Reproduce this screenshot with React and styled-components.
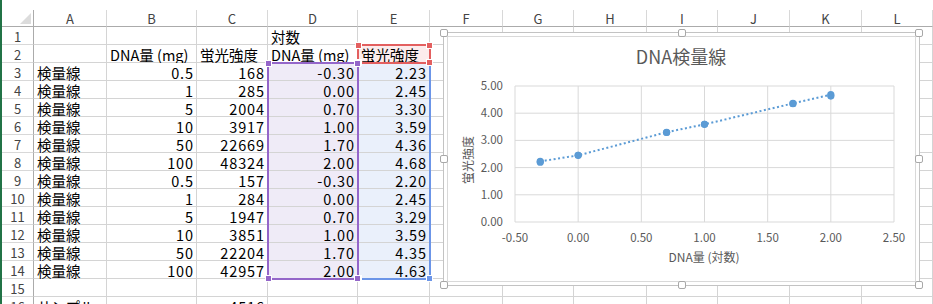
import React from 'react'
import styled, { createGlobalStyle, css } from 'styled-components'

const GlobalStyle = createGlobalStyle`
  html, body {
    margin: 0;
    padding: 0;
    background: #fff;
  }
  body {
    font-family: "Noto Sans CJK JP", "Noto Sans", sans-serif;
    overflow: hidden;
  }
`

const COLS = ['A', 'B', 'C', 'D', 'E', 'F', 'G', 'H', 'I', 'J', 'K', 'L']
const WIDTHS = [73, 90, 71, 90, 72, 73, 71, 73, 71, 72, 72, 71]
const TEMPLATE = `32px ${WIDTHS.map(w => w + 'px').join(' ')}`

const std = [
  ['0.5', '168', '-0.30', '2.23'],
  ['1', '285', '0.00', '2.45'],
  ['5', '2004', '0.70', '3.30'],
  ['10', '3917', '1.00', '3.59'],
  ['50', '22669', '1.70', '4.36'],
  ['100', '48324', '2.00', '4.68'],
  ['0.5', '157', '-0.30', '2.20'],
  ['1', '284', '0.00', '2.45'],
  ['5', '1947', '0.70', '3.29'],
  ['10', '3851', '1.00', '3.59'],
  ['50', '22204', '1.70', '4.35'],
  ['100', '42957', '2.00', '4.63'],
]

// sheet rows, column A..E
const ROWS = [
  ['', '', '', '対数', ''],
  ['', 'DNA量 (mg)', '蛍光強度', 'DNA量 (mg)', '蛍光強度'],
  ...std.map(r => ['検量線', ...r]),
  ['', '', '', '', ''],
  ['サンプル', '', '4516', '', ''],
]

const tintFor = (row, col) => {
  if (col === 3 && row >= 3 && row <= 14) return 'purple'
  if (col === 4 && row >= 3 && row <= 14) return 'blue'
  if (col === 4 && row === 2) return 'red'
  return null
}

const TINTS = {
  purple: '#efebf7',
  blue: '#eaf0fb',
  red: '#fcecec',
}

const RANGES = [
  { col: 6, r0: 3, r1: 14, color: '#6b95e8', corners: ['bl', 'br'] },
  { col: 6, r0: 2, r1: 2, color: '#e35f5f', corners: ['tl', 'tr', 'bl', 'br'] },
  { col: 5, r0: 3, r1: 14, color: '#9466c9', corners: ['tl', 'tr', 'bl', 'br'] },
]

function Sheet() {
  return (
    <SheetWrap>
      <Grid>
        <Corner />
        {COLS.map(c => <ColHead key={c}>{c}</ColHead>)}
        {ROWS.map((row, ri) => (
          <React.Fragment key={ri}>
            <RowHead>{ri + 1}</RowHead>
            {COLS.map((c, ci) => {
              const v = row[ci] || ''
              const num = v !== '' && !isNaN(Number(v))
              return (
                <Cell key={c} $right={num} $tint={tintFor(ri + 1, ci)}>
                  {v}
                </Cell>
              )
            })}
          </React.Fragment>
        ))}
      </Grid>
      <Overlay>
        {RANGES.map((r, i) => (
          <Range key={i} $col={r.col} $r0={r.r0} $r1={r.r1} $color={r.color}>
            {r.corners.map(k => <Handle key={k} $pos={k} $color={r.color} />)}
          </Range>
        ))}
      </Overlay>
      <Chart />
    </SheetWrap>
  )
}

// chart geometry, page coordinates
const X0 = 513
const X1 = 892
const YT = 86
const YB = 222
const xs = v => X0 + ((v + 0.5) / 3) * (X1 - X0)
const ys = v => YB - (v / 5) * (YB - YT)

const series = std.map(r => [Number(r[2]), Number(r[3])])

function Chart() {
  const xTicks = [-0.5, 0, 0.5, 1, 1.5, 2, 2.5]
  const yTicks = [0, 1, 2, 3, 4, 5]
  const line = series.slice(0, 6).map(([x, y]) => `${xs(x)},${ys(y)}`).join(' ')
  return (
    <ChartFrame>
      {['tl', 'tc', 'tr', 'ml', 'mr', 'bl', 'bc', 'br'].map(k => <FrameHandle key={k} $pos={k} />)}
      <ChartArea>
        <svg width="467" height="244" viewBox="446 37 467 244">
          <ChartTitle x="679" y="64" textAnchor="middle">DNA検量線</ChartTitle>
          {xTicks.map(t => (
            <line key={'gx' + t} x1={xs(t)} x2={xs(t)} y1={YT} y2={YB} stroke="#d9d9d9" strokeWidth="1" />
          ))}
          {yTicks.map(t => (
            <line key={'gy' + t} x1={X0} x2={X1} y1={ys(t)} y2={ys(t)} stroke="#d9d9d9" strokeWidth="1" />
          ))}
          {yTicks.map(t => (
            <TickText key={'ly' + t} x="501" y={ys(t) + 4} textAnchor="end">{t.toFixed(2)}</TickText>
          ))}
          {xTicks.map(t => (
            <TickText key={'lx' + t} x={xs(t)} y="242" textAnchor="middle">{t.toFixed(2)}</TickText>
          ))}
          <polyline points={line} fill="none" stroke="#5b9bd5" strokeWidth="2" strokeDasharray="2 2.5" />
          {series.map(([x, y], i) => (
            <circle key={i} cx={xs(x)} cy={ys(y)} r="3.6" fill="#5b9bd5" />
          ))}
          <AxisText x="702" y="262" textAnchor="middle">DNA量 (対数)</AxisText>
          <AxisText x="0" y="0" textAnchor="middle" transform="translate(471 160) rotate(-90)">蛍光強度</AxisText>
        </svg>
      </ChartArea>
    </ChartFrame>
  )
}

export default function App() {
  return (
    <>
      <GlobalStyle />
      <Sheet />
    </>
  )
}

const SheetWrap = styled.div`
  position: relative;
  width: 933px;
  height: 304px;
  overflow: hidden;
  box-sizing: border-box;
  border-left: 2px solid #217346;
  padding-top: 10px;
`

const Grid = styled.div`
  display: grid;
  grid-template-columns: ${TEMPLATE};
  grid-template-rows: 17px;
  grid-auto-rows: 18px;
`

const Overlay = styled.div`
  position: absolute;
  top: 10px;
  left: 0;
  display: grid;
  grid-template-columns: ${TEMPLATE};
  grid-template-rows: 17px;
  grid-auto-rows: 18px;
  pointer-events: none;
`

const headText = css`
  display: flex;
  align-items: center;
  justify-content: center;
  font-size: 13px;
  line-height: 15px;
  color: #444;
  box-sizing: border-box;
`

const Corner = styled.div`
  position: relative;
  border-right: 1px solid #ababab;
  border-bottom: 1px solid #ababab;
  &::after {
    content: '';
    position: absolute;
    right: 2px;
    bottom: 2px;
    width: 11px;
    height: 11px;
    background: #dcdcdc;
    clip-path: polygon(100% 0, 100% 100%, 0 100%);
  }
`

const ColHead = styled.div`
  ${headText}
  border-right: 1px solid #d8d8d8;
  border-bottom: 1px solid #ababab;
  padding-top: 1px;
`

const RowHead = styled.div`
  ${headText}
  border-right: 1px solid #ababab;
  border-bottom: 1px solid #d8d8d8;
  padding-top: 2px;
`

const Cell = styled.div`
  box-sizing: border-box;
  display: flex;
  align-items: center;
  justify-content: ${p => (p.$right ? 'flex-end' : 'flex-start')};
  border-right: 1px solid #d4d4d4;
  border-bottom: 1px solid #d4d4d4;
  background: ${p => (p.$tint ? TINTS[p.$tint] : '#fff')};
  font-size: 14.5px;
  line-height: 15px;
  padding: 2px ${p => (p.$right ? '2px' : '3px')} 0 3px;
  letter-spacing: ${p => (p.$right ? '0.9px' : '0')};
  white-space: nowrap;
  color: #000;
`

const Range = styled.div`
  position: relative;
  grid-column: ${p => p.$col} / span 1;
  grid-row: ${p => p.$r0 + 1} / ${p => p.$r1 + 2};
  margin: -1px;
  border: 2px solid ${p => p.$color};
`

const Handle = styled.span`
  position: absolute;
  width: 5px;
  height: 5px;
  background: ${p => p.$color};
  outline: 1px solid #fff;
  ${p => (p.$pos[0] === 't' ? 'top: -3px;' : 'bottom: -3px;')}
  ${p => (p.$pos[1] === 'l' ? 'left: -3px;' : 'right: -3px;')}
`

const ChartFrame = styled.div`
  position: absolute;
  left: 441px;
  top: 32px;
  width: 477px;
  height: 254px;
  box-sizing: border-box;
  border: 1px solid #c3c3c3;
  padding: 3px;
  background: #fff;
`

const FrameHandle = styled.span`
  position: absolute;
  width: 6px;
  height: 6px;
  background: #fff;
  border: 1px solid #a8a8a8;
  border-radius: 2px;
  ${p => ({ t: 'top: -4px;', m: 'top: calc(50% - 4px);', b: 'bottom: -4px;' }[p.$pos[0]])}
  ${p => ({ l: 'left: -4px;', c: 'left: calc(50% - 4px);', r: 'right: -4px;' }[p.$pos[1]])}
`

const ChartArea = styled.div`
  height: 100%;
  box-sizing: border-box;
  border: 1px solid #d9d9d9;
  svg {
    display: block;
  }
`

const ChartTitle = styled.text`
  font-family: "Noto Sans CJK JP", "Noto Sans", sans-serif;
  font-size: 18px;
  fill: #595959;
`

const TickText = styled.text`
  font-family: "Noto Sans CJK JP", "Noto Sans", sans-serif;
  font-size: 11.5px;
  fill: #595959;
`

const AxisText = styled.text`
  font-family: "Noto Sans CJK JP", "Noto Sans", sans-serif;
  font-size: 12px;
  fill: #595959;
`
